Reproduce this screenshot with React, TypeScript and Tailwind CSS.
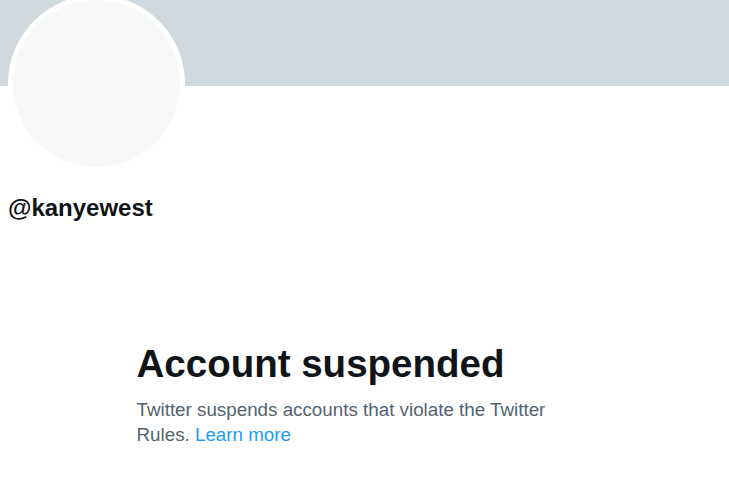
export default function App() {
  return (
    <div className="min-h-[478px] w-full bg-white" style={{ fontFamily: '"Liberation Sans", Arial, sans-serif' }}>
      <div className="h-[86px] w-full bg-[#cfd9de]" />
      <div className="px-[8px]">
        <div className="-mt-[91px] h-[177px] w-[177px] rounded-full border-[5px] border-white bg-[#f7f9f9]" />
        <div className="mt-[22px] text-[24px] font-bold leading-[28px] text-[#0f1419]">@kanyewest</div>
      </div>
      <div className="mx-auto mt-[119px] w-[456px]">
        <h1 className="text-[38.5px] font-bold leading-[46px] text-[#0f1419]">Account suspended</h1>
        <p className="mt-[10px] text-[18.8px] leading-[25px] text-[#536471]">
          Twitter suspends accounts that violate the Twitter Rules.{' '}
          <span className="text-[#1d9bf0]">Learn more</span>
        </p>
      </div>
    </div>
  );
}
